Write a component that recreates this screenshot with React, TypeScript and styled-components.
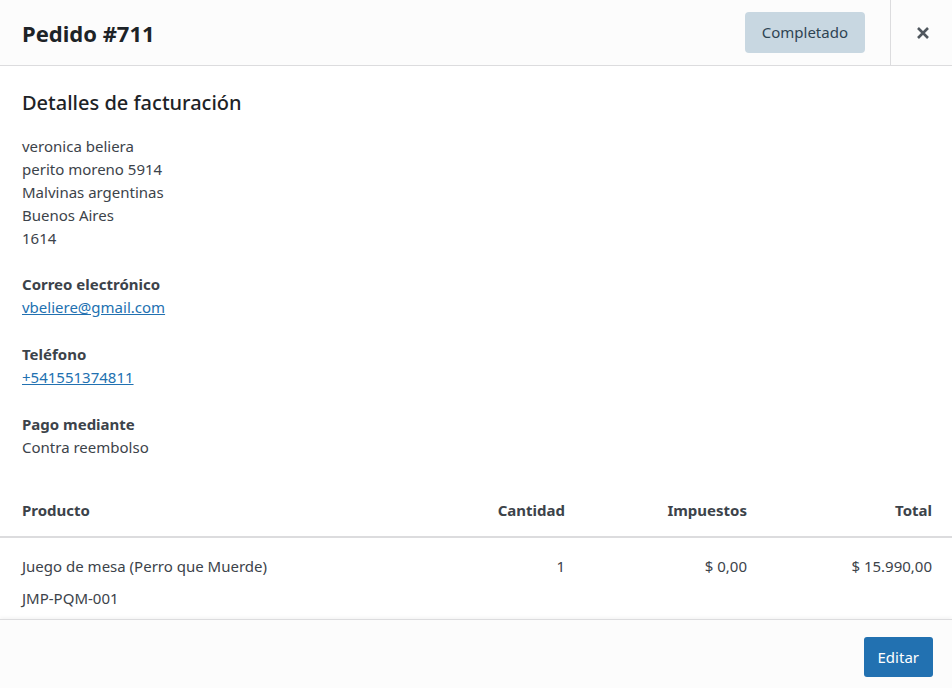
import React from "react";
import styled, { createGlobalStyle } from "styled-components";

const Global = createGlobalStyle`
  html, body { margin: 0; padding: 0; background: #fff; }
  body { font-family: "Noto Sans", "Open Sans", sans-serif; color: #3c434a; font-size: 15px; }
  * { box-sizing: border-box; }
`;

const Modal = styled.div`
  width: 952px;
  height: 688px;
  display: flex;
  flex-direction: column;
  background: #fff;
`;

const Header = styled.header`
  height: 66px;
  flex: none;
  display: flex;
  align-items: stretch;
  background: #fcfcfc;
  border-bottom: 1px solid #dcdcde;
`;

const Title = styled.h1`
  flex: 1;
  margin: 0;
  padding-left: 22px;
  display: flex;
  align-items: center;
  font-size: 22px;
  font-weight: 700;
  color: #1d2327;
`;

const Status = styled.span`
  align-self: center;
  margin: -1px 25px 0 0;
  height: 41px;
  padding: 0 17px;
  display: flex;
  align-items: center;
  background: #c8d7e1;
  color: #2e4453;
  border-radius: 4px;
  font-size: 15px;
`;

const Close = styled.button`
  width: 62px;
  border: 0;
  border-left: 1px solid #dcdcde;
  background: transparent;
  display: flex;
  align-items: center;
  justify-content: center;
  padding: 0 0 0 2px;
  color: #50575e;
`;

const Body = styled.div`
  flex: 1;
  overflow: hidden;
`;

const Section = styled.div`
  padding: 23px 22px 1px;
`;

const H2 = styled.h2`
  margin: 0 0 18px;
  font-size: 20px;
  font-weight: 500;
  color: #1d2327;
  line-height: 28px;
`;

const Block = styled.div<{ gap?: number }>`
  line-height: 23px;
  margin-bottom: ${(p) => p.gap ?? 24}px;
`;

const Label = styled.strong`
  display: block;
  font-weight: 700;
`;

const Link = styled.a`
  color: #2271b1;
  text-decoration: underline;
`;

const Row = styled.div<{ head?: boolean }>`
  display: grid;
  grid-template-columns: 1fr 120px 182px 185px;
  padding: ${(p) => (p.head ? "15px 20px 14px 22px" : "17px 20px 0 22px")};
  border-bottom: ${(p) => (p.head ? "2px solid #dcdcde" : "0")};
  font-weight: ${(p) => (p.head ? 700 : 400)};
  line-height: 23px;
`;

const Cell = styled.div<{ right?: boolean }>`
  text-align: ${(p) => (p.right ? "right" : "left")};
`;

const Sku = styled.div`
  margin-top: 9px;
`;

const Footer = styled.footer`
  height: 69px;
  flex: none;
  background: #fcfcfc;
  border-top: 1px solid #dcdcde;
  box-shadow: 0 -2px 3px rgba(0, 0, 0, 0.04);
  display: flex;
  align-items: center;
  justify-content: flex-end;
  padding: 0 19px;
`;

const Button = styled.button`
  height: 40px;
  padding: 0 14px;
  background: #2271b1;
  color: #fff;
  border: 0;
  border-radius: 3px;
  font-family: inherit;
  font-size: 15px;
  margin-top: 6px;
`;

export default function App() {
  return (
    <>
      <Global />
      <Modal>
        <Header>
          <Title>Pedido #711</Title>
          <Status>Completado</Status>
          <Close aria-label="Cerrar">
            <svg width="14" height="14" viewBox="0 0 14 14">
              <path d="M2 2 L12 12 M12 2 L2 12" stroke="#50575e" strokeWidth="2.6" strokeLinecap="butt" />
            </svg>
          </Close>
        </Header>
        <Body>
          <Section>
            <H2>Detalles de facturación</H2>
            <Block gap={23}>
              veronica beliera<br />
              perito moreno 5914<br />
              Malvinas argentinas<br />
              Buenos Aires<br />
              1614
            </Block>
            <Block>
              <Label>Correo electrónico</Label>
              <Link href="#">vbeliere@gmail.com</Link>
            </Block>
            <Block>
              <Label>Teléfono</Label>
              <Link href="#">+541551374811</Link>
            </Block>
            <Block>
              <Label>Pago mediante</Label>
              Contra reembolso
            </Block>
          </Section>
          <Row head>
            <Cell>Producto</Cell>
            <Cell right>Cantidad</Cell>
            <Cell right>Impuestos</Cell>
            <Cell right>Total</Cell>
          </Row>
          <Row>
            <Cell>
              Juego de mesa (Perro que Muerde)
              <Sku>JMP-PQM-001</Sku>
            </Cell>
            <Cell right>1</Cell>
            <Cell right>$ 0,00</Cell>
            <Cell right>$ 15.990,00</Cell>
          </Row>
        </Body>
        <Footer>
          <Button>Editar</Button>
        </Footer>
      </Modal>
    </>
  );
}
